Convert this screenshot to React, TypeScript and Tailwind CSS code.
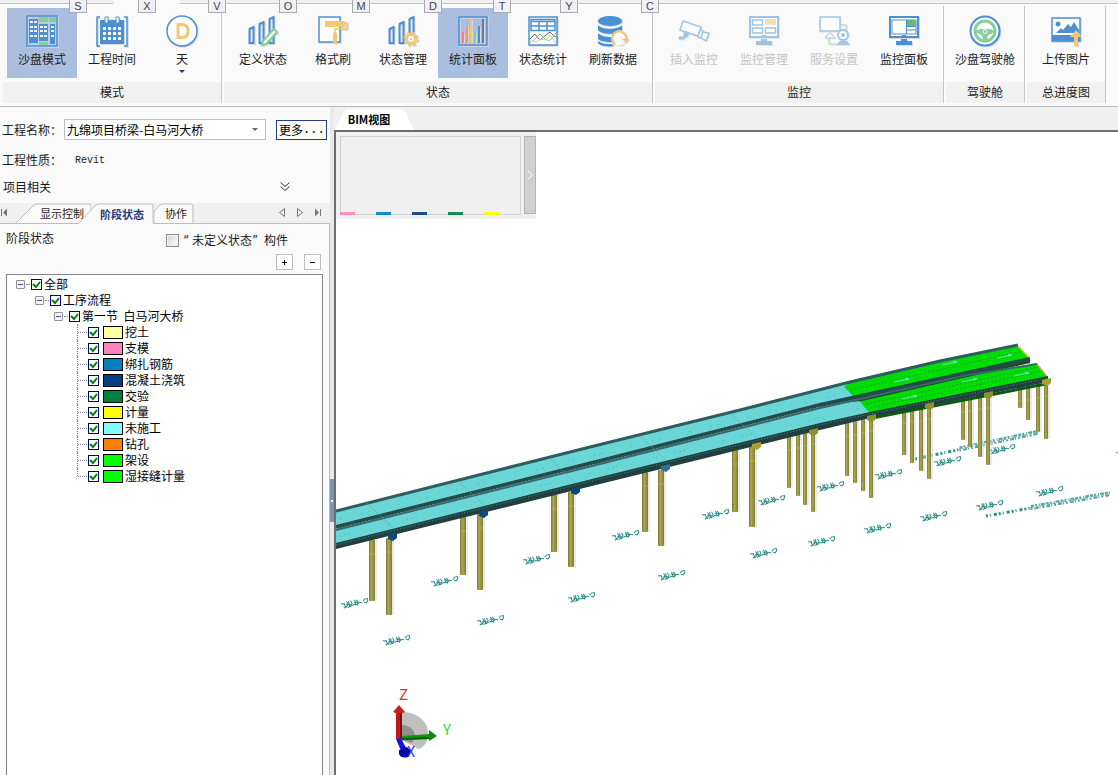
import { useState, type ReactNode } from 'react'
import clsx from 'clsx'

const BLUE = '#4a90d2'
const GOLD = '#f0c878'
const GREEN = '#86cf9a'

/* ---------- ribbon icons ---------- */

const Bars = () => (
  <g fill="none" stroke={BLUE} strokeWidth="2">
    <path d="M2.500 14l4-2v16h-4z" />
    <path d="M12.500 9l4-2v21h-4z" />
    <path d="M22.500 4l4-2v26h-4z" />
  </g>
)

const Screen = ({ children }: { children: ReactNode }) => (
  <>
    <rect x="2" y="2" width="28" height="20" fill="#fff" stroke={BLUE} strokeWidth="2" />
    {children}
    <path d="M14 20.500h4" stroke={BLUE} />
    <path d="M13 24h6v2h5v4H8v-4h5z" fill={BLUE} />
  </>
)

const icons: Record<string, ReactNode> = {
  sandbox: (
    <>
      <rect x="1" y="1" width="30" height="30" fill="#c3cbdc" stroke={BLUE} strokeWidth="1.500" />
      <path d="M13 2h9v5h-9zM23 2h7v5h-7zM13 27h9v3h-9z" fill={GREEN} />
      <path d="M3 4h9v24H3zM13 9h9v17h-9zM24 9h5v20h-5z" fill={BLUE} />
      <g stroke="#eef2f8" strokeWidth="2">
        <path d="M4 7h3M8 7h3M4 12h3M8 12h3M4 16h3M8 16h3M4 21h3M8 21h3M14 12h3M18 12h3M14 16h3M18 16h3M14 21h3M18 21h3M25 12h3M25 16h3M25 21h3" />
      </g>
    </>
  ),
  calendar: (
    <>
      <path d="M4 2H1v29h3M28 2h3v29h-3" fill="none" stroke={BLUE} strokeWidth="1.500" />
      <path d="M4 5h24v24H4z" fill={BLUE} />
      <path d="M9 2h3v6H9zM20 2h3v6h-3z" fill="#fff" stroke={BLUE} />
      <g stroke="#fff" strokeWidth="3">
        <path d="M7 13.500h18M7 18.500h18M7 23.500h18" strokeDasharray="3 2" />
      </g>
    </>
  ),
  day: (
    <>
      <circle cx="16" cy="16" r="15" fill="#fff" stroke={BLUE} strokeWidth="1.500" />
      <path d="M12 9.500h4c4 0 6 2.500 6 6.500s-2 6.500-6 6.500h-4z" fill="none" stroke={GOLD} strokeWidth="3" />
    </>
  ),
  define: (
    <>
      <Bars />
      <path d="M27 14l3 3-11 12-4 1 1-4z" fill="#fff" stroke={GREEN} strokeWidth="2" />
    </>
  ),
  brush: (
    <>
      <rect x="2" y="2" width="21" height="25" fill="#fff" stroke={BLUE} strokeWidth="1.500" />
      <rect x="8" y="6" width="20" height="6" rx="1" fill={GOLD} />
      <path d="M28 8h2v6H18v4" fill="none" stroke={GOLD} strokeWidth="1.500" />
      <rect x="16" y="17" width="4" height="12" rx="2" fill={GOLD} />
    </>
  ),
  manage: (
    <>
      <Bars />
      <circle cx="24" cy="24" r="4.500" fill="#fff" stroke={GOLD} strokeWidth="3" />
      <circle cx="24" cy="24" r="6.500" fill="none" stroke={GOLD} strokeWidth="2" strokeDasharray="2.800 2.300" />
      <circle cx="24" cy="24" r="1.200" fill={GOLD} />
    </>
  ),
  chart: (
    <>
      <rect x="2" y="2" width="28" height="28" fill="none" stroke={BLUE} strokeWidth="1.500" />
      <g strokeWidth="2">
        <path d="M6 17v11" stroke="#ef7f80" />
        <path d="M10 11v17" stroke="#ee9a68" />
        <path d="M14 4v24" stroke="#f3c56c" />
        <path d="M18 17v11" stroke={GREEN} />
        <path d="M22 11v17" stroke={BLUE} />
        <path d="M26 4v24" stroke="#6b7690" />
      </g>
    </>
  ),
  stats: (
    <>
      <rect x="2" y="2" width="28" height="28" fill="#fff" stroke={BLUE} strokeWidth="1.500" />
      <path d="M4 4.500h24v11H4zM4 6.500h24M4 11h24M12 6.500v9M20 6.500v9" fill="none" stroke={BLUE} strokeWidth="1.500" />
      <path d="M3 24l5-5 5 6 6-5 4-3 3 3 3 2" fill="none" stroke="#59627a" />
      <path d="M3 28l5-4 5-5 5 5 4 2 4-4 3-4" fill="none" stroke={GREEN} />
      <path d="M3 26l6 1 5-3 5 1 4-5 6 8" fill="none" stroke={GOLD} />
    </>
  ),
  refresh: (
    <>
      <g fill={BLUE}>
        <ellipse cx="13" cy="6" rx="12" ry="5" />
        <path d="M1 10c4 5 20 5 24 0v5c-3 5-21 5-24 0z" />
        <path d="M1 18c4 4 14 5 18 3l-3 6c-6 0-12 0-15-3z" />
        <path d="M1 26c4 3 9 3 14 3l2 2c-7 1-14 0-16-3z" />
      </g>
      <circle cx="22" cy="23" r="7.500" fill="#fafafa" />
      <path d="M18 29a7 7 0 1 1 11-4" fill="none" stroke={GOLD} strokeWidth="2.500" />
      <path d="M25 24h7l-3 4z" fill={GOLD} />
    </>
  ),
  camera: (
    <>
      <path d="M5 6l18 6-3 9-18-6z" fill="#fff" stroke={BLUE} strokeWidth="1.500" />
      <path d="M22 15l3 1-2 7-3-1z M25 17l6 1-3 8-5-3z" fill="#fff" stroke={BLUE} strokeWidth="1.500" />
      <path d="M6 17l5 2-2 3H7l-1 2H1v-2h5z" fill={BLUE} stroke={BLUE} />
    </>
  ),
  screens: (
    <Screen>
      <path d="M4.500 5h10v5h-10zM4.500 13h10v5h-10zM17.500 13h10v5h-10z" fill="#fff" stroke={BLUE} strokeWidth="1.500" />
      <path d="M17 4h11v6H17z" fill={GOLD} />
    </Screen>
  ),
  service: (
    <>
      <path d="M22 10h6v9M11 24v5h8" fill="none" stroke={GREEN} strokeWidth="1.500" />
      <rect x="2" y="2" width="20" height="14" fill="#fff" stroke={BLUE} strokeWidth="1.500" />
      <path d="M9 20l3-2 3 2 2 3H7z" fill="#fff" stroke={BLUE} />
      <circle cx="25" cy="20" r="5" fill="#fff" stroke={BLUE} strokeWidth="2" />
      <circle cx="25" cy="20" r="2" fill={BLUE} />
      <path d="M22 26h7l3 4H18z" fill={BLUE} />
    </>
  ),
  monitor: (
    <Screen>
      <rect x="4" y="5" width="24" height="14" fill="#fff" stroke="#6f87ad" />
      <path d="M18 5h10v6H18z" fill="#62bd7c" />
      <path d="M18.500 5v14M18 11.500h10M18 15h10" stroke={BLUE} />
    </Screen>
  ),
  wheel: (
    <>
      <circle cx="16" cy="16" r="14.500" fill="#fff" stroke={BLUE} strokeWidth="2" />
      <circle cx="16" cy="16" r="10" fill="none" stroke={GREEN} strokeWidth="3" />
      <path d="M6 16c6-3 14-3 20 0l-4 3c-3 0-4 3-4 7h-4c0-4-1-7-4-7z" fill={GREEN} />
      <circle cx="16" cy="16.500" r="2" fill={GREEN} stroke="#fff" />
    </>
  ),
  upload: (
    <>
      <rect x="2" y="3" width="28" height="23" fill="#fff" stroke={BLUE} strokeWidth="1.500" />
      <path d="M2 20h28v6H2z" fill={BLUE} />
      <circle cx="8" cy="9" r="2.500" fill={BLUE} />
      <path d="M6 18l5-5 2 2 5-6 3 3 3-5 5 8v3z" fill={BLUE} />
      <path d="M26 15l6 7h-4v9h-4v-9h-4z" fill={GOLD} />
    </>
  ),
}

/* ---------- ribbon ---------- */

type Action = { icon: string; label: string; active?: boolean; disabled?: boolean; menu?: boolean }

const groups: { title: string; actions: Action[] }[] = [
  {
    title: '模式',
    actions: [
      { icon: 'sandbox', label: '沙盘模式', active: true },
      { icon: 'calendar', label: '工程时间' },
      { icon: 'day', label: '天', menu: true },
    ],
  },
  {
    title: '状态',
    actions: [
      { icon: 'define', label: '定义状态' },
      { icon: 'brush', label: '格式刷' },
      { icon: 'manage', label: '状态管理' },
      { icon: 'chart', label: '统计面板', active: true },
      { icon: 'stats', label: '状态统计' },
      { icon: 'refresh', label: '刷新数据' },
    ],
  },
  {
    title: '监控',
    actions: [
      { icon: 'camera', label: '插入监控', disabled: true },
      { icon: 'screens', label: '监控管理', disabled: true },
      { icon: 'service', label: '服务设置', disabled: true },
      { icon: 'monitor', label: '监控面板' },
    ],
  },
  { title: '驾驶舱', actions: [{ icon: 'wheel', label: '沙盘驾驶舱' }] },
  { title: '总进度图', actions: [{ icon: 'upload', label: '上传图片' }] },
]

const keyTips = [
  { key: 'S', pos: 'left-[69px]' },
  { key: 'X', pos: 'left-[138px]' },
  { key: 'V', pos: 'left-[208px]' },
  { key: 'O', pos: 'left-[279px]' },
  { key: 'M', pos: 'left-[352px]' },
  { key: 'D', pos: 'left-[424px]' },
  { key: 'T', pos: 'left-[493px]' },
  { key: 'Y', pos: 'left-[560px]' },
  { key: 'C', pos: 'left-[641px]' },
]

function RibbonButton({ icon, label, active, disabled, menu }: Action) {
  return (
    <button
      disabled={disabled}
      className={clsx(
        'flex h-[70px] w-[70px] shrink-0 flex-col items-center pt-[7px] text-xs whitespace-nowrap',
        active ? 'bg-[#aabfe0]' : 'hover:bg-[#dfe8f5]',
        disabled ? 'text-[#c4c4c4]' : 'text-[#1e1e1e]',
      )}
    >
      <svg
        viewBox="0 0 32 32"
        className={clsx('size-8 shrink-0 overflow-visible drop-shadow-[1px_1px_0_#d6d6e0]', disabled && 'opacity-50')}
      >
        {icons[icon]}
      </svg>
      <span className="mt-[3px] leading-[18px]">{label}</span>
      {menu && (
        <svg viewBox="0 0 6 3" className="mt-0.5 h-[3px] w-1.5 shrink-0">
          <path d="M0 0h6L3 3z" fill="#1c3f77" />
        </svg>
      )}
    </button>
  )
}

function Ribbon() {
  return (
    <header className="relative shrink-0 border-b border-[#b9b9b9] bg-[#fafafa]">
      <div className="flex h-1 items-stretch">
        <div className="w-[113px] border-b border-[#c3c3c3] bg-[#f0f0f0]" />
        <div className="w-[67px]" />
        <div className="flex-1 border-b border-[#c3c3c3] bg-[#f0f0f0]" />
      </div>
      <div className="flex pt-0.5 pb-[3px]">
        {groups.map((g, i) => (
          <section
            key={g.title}
            className={clsx('flex flex-col border-r border-[#c6c6c6] pt-0.5', i === 0 ? 'pl-[3px]' : 'pl-0.5')}
          >
            <div className="flex px-1">
              {g.actions.map(a => (
                <RibbonButton key={a.label} {...a} />
              ))}
            </div>
            <h2 className="mt-1 bg-[#f1f1f1] pb-px text-center text-xs leading-5 text-[#1e1e1e]">{g.title}</h2>
          </section>
        ))}
      </div>
      {keyTips.map(t => (
        <kbd
          key={t.key}
          className={clsx(
            "absolute top-0 h-[13px] w-[18px] border border-t-0 border-[#a9a9a9] bg-[#f0f0f6] text-center font-['Liberation_Sans',sans-serif] text-[11px] leading-3 text-[#444]",
            t.pos,
          )}
        >
          {t.key}
        </kbd>
      ))}
    </header>
  )
}

/* ---------- left panel ---------- */

const stages = [
  { name: '挖土', color: 'bg-[#ffff9f]' },
  { name: '支模', color: 'bg-[#ff80c0]' },
  { name: '绑扎钢筋', color: 'bg-[#0080c0]' },
  { name: '混凝土浇筑', color: 'bg-[#004080]' },
  { name: '交验', color: 'bg-[#008040]' },
  { name: '计量', color: 'bg-[#ffff00]' },
  { name: '未施工', color: 'bg-[#80ffff]' },
  { name: '钻孔', color: 'bg-[#ff8000]' },
  { name: '架设', color: 'bg-[#00ff00]' },
  { name: '湿接缝计量', color: 'bg-[#00ff00]' },
]

const branches = [
  { name: '全部', indent: 'pl-[9px]' },
  { name: '工序流程', indent: 'pl-[28px]' },
  { name: '第一节  白马河大桥', indent: 'pl-[47px]' },
]

function TreeCheck({ children }: { children: ReactNode }) {
  return (
    <label className="flex items-center whitespace-pre">
      <span className="relative size-[11px] shrink-0">
        <input
          type="checkbox"
          defaultChecked
          className="peer block size-[11px] appearance-none border border-[#000080] bg-white"
        />
        <svg viewBox="0 0 11 11" className="pointer-events-none absolute inset-0 hidden peer-checked:block">
          <path d="M2 5l3 3 4-5" fill="none" stroke="#008000" strokeWidth="2" />
        </svg>
      </span>
      {children}
    </label>
  )
}

function StageTree() {
  return (
    <div className="mx-1.5 mt-1 flex-1 overflow-hidden border border-b-0 border-[#828790] bg-white pt-px text-xs leading-4 text-black">
      {branches.map(b => (
        <div key={b.name} className={clsx('flex h-4 items-center', b.indent)}>
          <button aria-label="折叠" className="flex size-[9px] items-center rounded-[1px] border border-[#919191] bg-[#f4f4f4] px-px">
            <span className="h-px w-full bg-[#3a4f9a]" />
          </button>
          <span className="mx-px w-1 border-t border-dotted border-[#808080]" />
          <TreeCheck>
            <span className="pl-0.5">{b.name}</span>
          </TreeCheck>
        </div>
      ))}
      <ul className="ml-[70px]">
        {stages.map((s, i) => (
          <li key={s.name} className="flex h-4">
            <span className={clsx('border-l border-dotted border-[#808080]', i === stages.length - 1 ? 'h-2' : 'h-4')} />
            <span className="mt-2 mr-px w-[9px] border-t border-dotted border-[#808080]" />
            <TreeCheck>
              <span className={clsx('mr-0.5 ml-1 h-[13px] w-5 border border-black', s.color)} />
              {s.name}
            </TreeCheck>
          </li>
        ))}
      </ul>
    </div>
  )
}

function PanelTabs() {
  return (
    <div className="flex h-[21px] items-stretch border-b border-[#bdbdbd] bg-[#f0f0f0] text-[11px] leading-[18px]">
      <button aria-label="第一个" className="w-4">
        <svg viewBox="0 0 16 20" className="h-5 w-4">
          <path d="M1.500 6v7" stroke="#777" />
          <path d="M7 5.500v8L3 9.500z" fill="#777" />
        </svg>
      </button>
      <button className="relative h-5 w-[75px] pl-6 text-left whitespace-nowrap text-[#1e1e1e]">
        <svg viewBox="0 0 75 20" className="absolute inset-0 h-5 w-[75px]">
          <path d="M0 20L17 3q2-2 4-2h52q2 0 2 2v17" fill="#fafafa" stroke="#bdbdbd" />
        </svg>
        <span className="relative">显示控制</span>
      </button>
      <button className="relative -ml-[13px] h-[21px] w-[76px] pl-[22px] text-left font-bold whitespace-nowrap text-[#1f3f7a]">
        <svg viewBox="0 0 76 21" className="absolute inset-0 h-[21px] w-[76px]">
          <path d="M0 21L17 3q2-2 4-2h52q2 0 2 2v18" fill="#fafafa" stroke="#bdbdbd" />
          <path d="M1 20.500h74" stroke="#fafafa" />
        </svg>
        <span className="relative">阶段状态</span>
      </button>
      <button className="relative h-5 w-10 pl-[11px] text-left whitespace-nowrap text-[#1e1e1e]">
        <svg viewBox="0 0 40 20" className="absolute inset-0 h-5 w-10">
          <path d="M0 20V8l5-5q2-2 4-2h28q2 0 2 2v17" fill="#fafafa" stroke="#bdbdbd" />
        </svg>
        <span className="relative">协作</span>
      </button>
      <div className="ml-auto flex gap-0.5 pr-1">
        <button aria-label="上一个" className="w-4">
          <svg viewBox="0 0 16 20" className="h-5 w-4">
            <path d="M10.500 5.500v8l-5-4z" fill="none" stroke="#777" />
          </svg>
        </button>
        <button aria-label="下一个" className="w-4">
          <svg viewBox="0 0 16 20" className="h-5 w-4">
            <path d="M5.500 5.500v8l5-4z" fill="none" stroke="#777" />
          </svg>
        </button>
        <button aria-label="最后一个" className="w-4">
          <svg viewBox="0 0 16 20" className="h-5 w-4">
            <path d="M5 5.500v8l4-4z" fill="#777" />
            <path d="M10.500 6v7" stroke="#777" />
          </svg>
        </button>
      </div>
    </div>
  )
}

function SidePanel() {
  const [project, setProject] = useState('九绵项目桥梁-白马河大桥')

  return (
    <aside className="flex w-[330px] shrink-0 flex-col bg-[#fafafa] pt-3 text-xs leading-4 text-[#1a1a1a]">
      <div className="flex h-[21px] items-center pl-0.5">
        <label htmlFor="project" className="w-[62px] whitespace-nowrap">工程名称：</label>
        <span className="relative">
          <select
            id="project"
            value={project}
            onChange={e => setProject(e.target.value)}
            className="block h-[21px] w-[202px] appearance-none border border-[#c0c0c0] bg-white pl-0.5 text-black"
          >
            <option>九绵项目桥梁-白马河大桥</option>
          </select>
          <svg viewBox="0 0 6 3" className="pointer-events-none absolute top-[9px] right-2 h-[3px] w-1.5">
            <path d="M0 0h6L3 3z" fill="#666" />
          </svg>
        </span>
        <button className="ml-2.5 flex h-5 w-[51px] items-center border border-[#1f3f7a] bg-[#fafafa] pl-0.5 text-black">
          更多<span className="font-['Liberation_Mono',monospace]">...</span>
        </button>
      </div>
      <div className="mt-3 flex h-4 items-center pl-0.5">
        <span className="w-[73px]">工程性质：</span>
        <span className="pt-px font-['Liberation_Mono',monospace] text-[10px]">Revit</span>
      </div>
      <div className="mt-[11px] mb-2 flex h-4 items-center justify-between pr-10 pl-[3px]">
        <span>项目相关</span>
        <button aria-label="展开" className="size-2.5">
          <svg viewBox="0 0 10 10" className="size-2.5">
            <path d="M.5 .5l4.500 4 4.500-4M.5 4.500l4.500 4 4.500-4" fill="none" stroke="#333" />
          </svg>
        </button>
      </div>
      <PanelTabs />
      <div className="flex flex-1 flex-col border-r border-[#bdbdbd] pt-1.5">
        <div className="flex h-5 items-center pl-1.5">
          <span className="w-[160px] pb-1">阶段状态</span>
          <label className="flex items-center whitespace-nowrap">
            <input
              type="checkbox"
              className="mr-[5px] size-[13px] appearance-none border border-[#8e8f8f] bg-gradient-to-br from-[#cfd3da] to-white shadow-[inset_0_0_0_1px_#f4f4f4]"
            />
            <span className="w-2 font-['Noto_Sans',sans-serif]">“</span>
            未定义状态
            <span className="w-3 pl-px font-['Noto_Sans',sans-serif]">”</span>
            构件
          </label>
        </div>
        <div className="mt-1 flex justify-end gap-[11px] pr-2 text-black">
          <button aria-label="全部展开" className="flex h-4 w-[17px] items-center justify-center border border-[#bdbdbd] bg-white">
            <svg viewBox="0 0 5 5" className="size-[5px]"><path d="M0 2.500h5M2.500 0v5" stroke="#000" /></svg>
          </button>
          <button aria-label="全部折叠" className="flex h-4 w-[17px] items-center justify-center border border-[#bdbdbd] bg-white">
            <svg viewBox="0 0 5 5" className="size-[5px]"><path d="M0 2.500h5" stroke="#000" /></svg>
          </button>
        </div>
        <StageTree />
      </div>
    </aside>
  )
}

/* ---------- 3D view ---------- */

// x, top, bottom, width
const piers = [
  [372, 540, 601, 6], [389, 538, 615, 6], [463, 517, 575, 6], [480, 514, 590, 6],
  [554, 495, 552, 6], [571, 492, 567, 6], [645, 472, 532, 6], [661, 470, 546, 6],
  [735, 450, 512, 6], [752, 447, 527, 6], [789, 436, 488, 4], [798, 434, 496, 4],
  [805, 432, 505, 4], [813, 430, 512, 4], [847, 422, 476, 4], [855, 421, 483, 4],
  [863, 419, 491, 4], [871, 417, 498, 4], [904, 409, 455, 4], [912, 408, 463, 4],
  [921, 407, 471, 4], [929, 405, 479, 4], [963, 398, 440, 4], [970, 397, 447, 4],
  [980, 395, 457, 4], [988, 394, 465, 4], [1020, 387, 408, 4], [1028, 386, 420, 4],
  [1038, 384, 432, 4], [1046, 382, 439, 4],
]

// x, y, fill
const caps: [number, number, string][] = [
  [392, 537, '#0b4a80'], [483, 514, '#0b4a80'], [575, 491, '#0b4a80'], [665, 468, '#33709c'],
  [756, 446, '#a8a02c'], [813, 432, '#8f8f30'], [871, 418, '#8f8f30'], [929, 406, '#8f8f30'],
  [988, 395, '#8f8f30'], [1046, 382, '#a8a02c'],
]

const marks = [
  [355, 603], [397, 640], [445, 581], [491, 620], [537, 559], [582, 597], [626, 535], [672, 575],
  [716, 514], [764, 553], [772, 500], [822, 541], [831, 486], [878, 528], [889, 474], [934, 516],
  [948, 461], [990, 505], [1002, 449], [1050, 491],
]

const arrows = [
  [902, 380], [950, 363], [1005, 356], [910, 397], [970, 380], [1022, 374],
]

function Scene() {
  return (
    <svg viewBox="336 132 782 643" preserveAspectRatio="xMinYMin slice" className="absolute inset-0 h-full w-full">
      <defs>
        <linearGradient id="pier">
          <stop offset="0" stopColor="#7d7b35" />
          <stop offset=".4" stopColor="#aaa850" />
          <stop offset="1" stopColor="#7f7d2e" />
        </linearGradient>
        <g id="mark" fill="none" stroke="#2c8c8c" strokeWidth="1">
          <path d="M-14-2l4 1M-11-2l1 4-2 1M-8-3l1 3-3 3M-9 0l5 1M-8 3l4-1M-6-3v6M-4-3l1 3-2 3M-3 2l2-1" />
          <path d="M0-3l1 3-2 2M-1-1l5 1M2-3l1 3-1 3M0 2l4-1M4 0l3 1" />
          <path d="M8 0l2-2 3 0v2l-2 2-2-1" />
        </g>
        <g id="note" fill="none" stroke="#2c8c8c">
          <path d="M0 0h44" strokeWidth="3" strokeDasharray="2 2 1 3 3 2" />
          <path d="M46-2h80" strokeWidth="2" strokeDasharray="3 1 2 2 1 1 4 1" opacity=".8" />
          <path d="M45 1h81" strokeWidth="2" strokeDasharray="2 2 4 1 1 2" opacity=".8" />
          <path d="M44-.5h82" strokeDasharray="5 2 3 1" opacity=".7" />
        </g>
      </defs>

      {marks.map(([x, y]) => (
        <use key={`${x}-${y}`} href="#mark" transform={`translate(${x} ${y}) rotate(-11)`} />
      ))}
      <use href="#note" transform="translate(915 459) rotate(-12)" />
      <use href="#note" transform="translate(986 516) rotate(-10)" />
      <path d="M1116 452l2 1" stroke="#2c8c8c" />

      {piers.map(([x, top, bottom, w]) => (
        <g key={x}>
          <path d={`M${x + w / 2 + 1} ${top}V${bottom}`} stroke="#d5d3dc" />
          <rect x={x - w / 2} y={top} width={w} height={bottom - top} rx="1" fill="url(#pier)" />
          <path d={`M${x - w / 2} ${top + 14}h${w}`} stroke="#c3bc3c" opacity=".6" />
        </g>
      ))}

      {/* far deck */}
      <path d="M336 510L590 447 740 409 850 382 854 397 820 405 600 460 336 527z" fill="#6ad6d6" />
      <path d="M844 387L850 382 940 362 1018 346 1030 358 930 381 855 398z" fill="#00dc05" />
      <path d="M336 511L590 447 740 410 850 382 940 361 1018 345" fill="none" stroke="#2f5c5e" strokeWidth="3" />
      <path d="M1018 346l11 12" stroke="#e0b83c" strokeWidth="1.500" />

      {/* near deck */}
      <path d="M336 528L600 463 820 407 858 398 870 414 820 426 600 479 336 545z" fill="#6ad6d6" />
      <path d="M858 399L963 377 1037 363 1048 378 870 414z" fill="#00dc05" />
      <path d="M840 403L930 382 1030 360v3L963 378 862 401z" fill="#174f1a" />
      <path d="M336 527L600 461 820 405 930 381 1030 359" fill="none" stroke="#244a4c" strokeWidth="4" />
      <path d="M336 530L600 464 820 408 963 376 1037 364" fill="none" stroke="#36696b" strokeWidth="2" />
      <path d="M336 528.500L600 462.500 820 406.500" fill="none" stroke="#7fb6b6" strokeWidth=".6" strokeDasharray="1 2" />
      <path d="M1037 364l11 14" stroke="#d5ad66" strokeWidth="1.500" />
      <path d="M336 543L600 477 820 423 870 412 1048 376v6L870 418 820 430 600 484 336 549z" fill="#203f40" />
      <path d="M870 417L1048 382v3L870 420z" fill="#0b5a12" />
      <path d="M336 545L600 479 820 425 870 414 1048 378" fill="none" stroke="#6fa3a3" strokeWidth=".7" strokeDasharray="1 2" />

      {/* deck joints and surface dots */}
      <path d="M367 503l27 26M458 481l27 25M549 458l27 25M640 436l27 25M730 413l27 25" stroke="#4eb0b0" strokeWidth=".5" />
      <g fill="none" stroke="#3f9797" strokeWidth=".8">
        <path d="M340 519L620 449 845 393" strokeDasharray="1 21 1 6 1 30" />
        <path d="M340 536L620 466 860 408" strokeDasharray="1 4 1 3 1 40 1 18" />
      </g>
      <g fill="none" stroke="#0b9c1a" strokeWidth=".8" strokeDasharray="2 2">
        <path d="M850 390L1022 351M870 408L1043 371M866 404L1039 367" />
      </g>
      {arrows.map(([x, y]) => (
        <path key={x} d={`M${x - 8} ${y + 2}l14-3m-3-1l4 1-4 1`} fill="none" stroke="#6ee0b4" />
      ))}

      {caps.map(([x, y, fill]) => (
        <path key={x} d={`M${x - 4} ${y - 2}l9-2v5l-4 3-5-2z`} fill={fill} />
      ))}

      {/* orientation gizmo */}
      <path d="M402 712c16 0 26 10 26 21 0 9-4 15-10 16l-16-9z" fill="#c0c0c0" />
      <path d="M402 725c8 0 13 6 13 11l-3 7-10-3z" fill="#8f8f8f" />
      <path d="M396 711h6v28h-6z" fill="#c01818" />
      <path d="M400 711h2v28h-2z" fill="#7c0d0d" />
      <path d="M393 712l6-7 6 7q-6 3-12 0z" fill="#cc1f1f" />
      <path d="M402 736l27-2v5l-27 1z" fill="#0a9a0a" />
      <path d="M402 738l27-1v2l-27 1z" fill="#065c06" />
      <path d="M429 730l8 6-8 5z" fill="#0a860a" />
      <path d="M396 739l5-1 6 12-5 3z" fill="#1414e6" />
      <path d="M399 750l8-3 4 4-3 6q-7 2-9-3z" fill="#0505a0" />
      <g fontFamily="Noto Sans CJK SC, sans-serif" fontSize="15">
        <text x="399" y="700" fill="#f02828">Z</text>
        <text x="443" y="735" fill="#22e022">Y</text>
        <text x="407" y="757" fontSize="14" fill="#2828f0">X</text>
      </g>
    </svg>
  )
}

const series = ['bg-[#ff80c0]', 'bg-[#0080c0]', 'bg-[#004080]', 'bg-[#008040]', 'bg-[#ffff00]']

function BimView() {
  return (
    <main className="flex min-w-0 flex-1 flex-col bg-[#f0f0f0]">
      <div className="flex h-[23px] items-end">
        <button className="relative ml-px h-[21px] w-20 pr-3 pb-0.5 text-center text-[11px] leading-[18px] font-bold text-black">
          <svg viewBox="0 0 80 21" className="absolute inset-0 h-[21px] w-20">
            <path d="M0 21L8 4q2-4 5-4h53q3 0 5 4l8 17z" fill="#fff" />
          </svg>
          <span className="relative">BIM视图</span>
        </button>
      </div>
      <div className="relative flex-1 overflow-hidden border-t-2 border-l-2 border-[#6e6e6e] bg-white">
        <Scene />
        <div className="absolute top-0 left-0 flex gap-[3px] bg-[#f0f0f0] pt-1 pb-1 pl-1">
          <div className="flex h-[79px] w-[181px] border border-[#d3d3d3]">
            <div className="-mb-px -ml-px flex items-end gap-[21px]">
              {series.map(c => (
                <div key={c} className={clsx('h-[3px] w-[15px] opacity-90', c)} />
              ))}
            </div>
          </div>
          <button aria-label="展开统计" className="flex h-[78px] w-3 items-center justify-center border border-[#b5b5b5] bg-[#d0d0d0]">
            <svg viewBox="0 0 6 10" className="h-2.5 w-1.5">
              <path d="M.5 .5l5 4.500-5 4.500" fill="none" stroke="#fff" />
            </svg>
          </button>
        </div>
      </div>
    </main>
  )
}

export default function App() {
  return (
    <div className="flex h-screen flex-col overflow-hidden bg-[#f0f0f0] font-['Noto_Sans_CJK_SC',sans-serif]">
      <Ribbon />
      <div className="flex min-h-0 flex-1">
        <SidePanel />
        <div className="w-1 shrink-0 bg-[#e9e9e9] pt-[372px]">
          <button aria-label="收起面板" className="flex h-[43px] w-1 items-center justify-center bg-[#7f93b5]">
            <span className="size-0.5 bg-white" />
          </button>
        </div>
        <BimView />
      </div>
    </div>
  )
}
